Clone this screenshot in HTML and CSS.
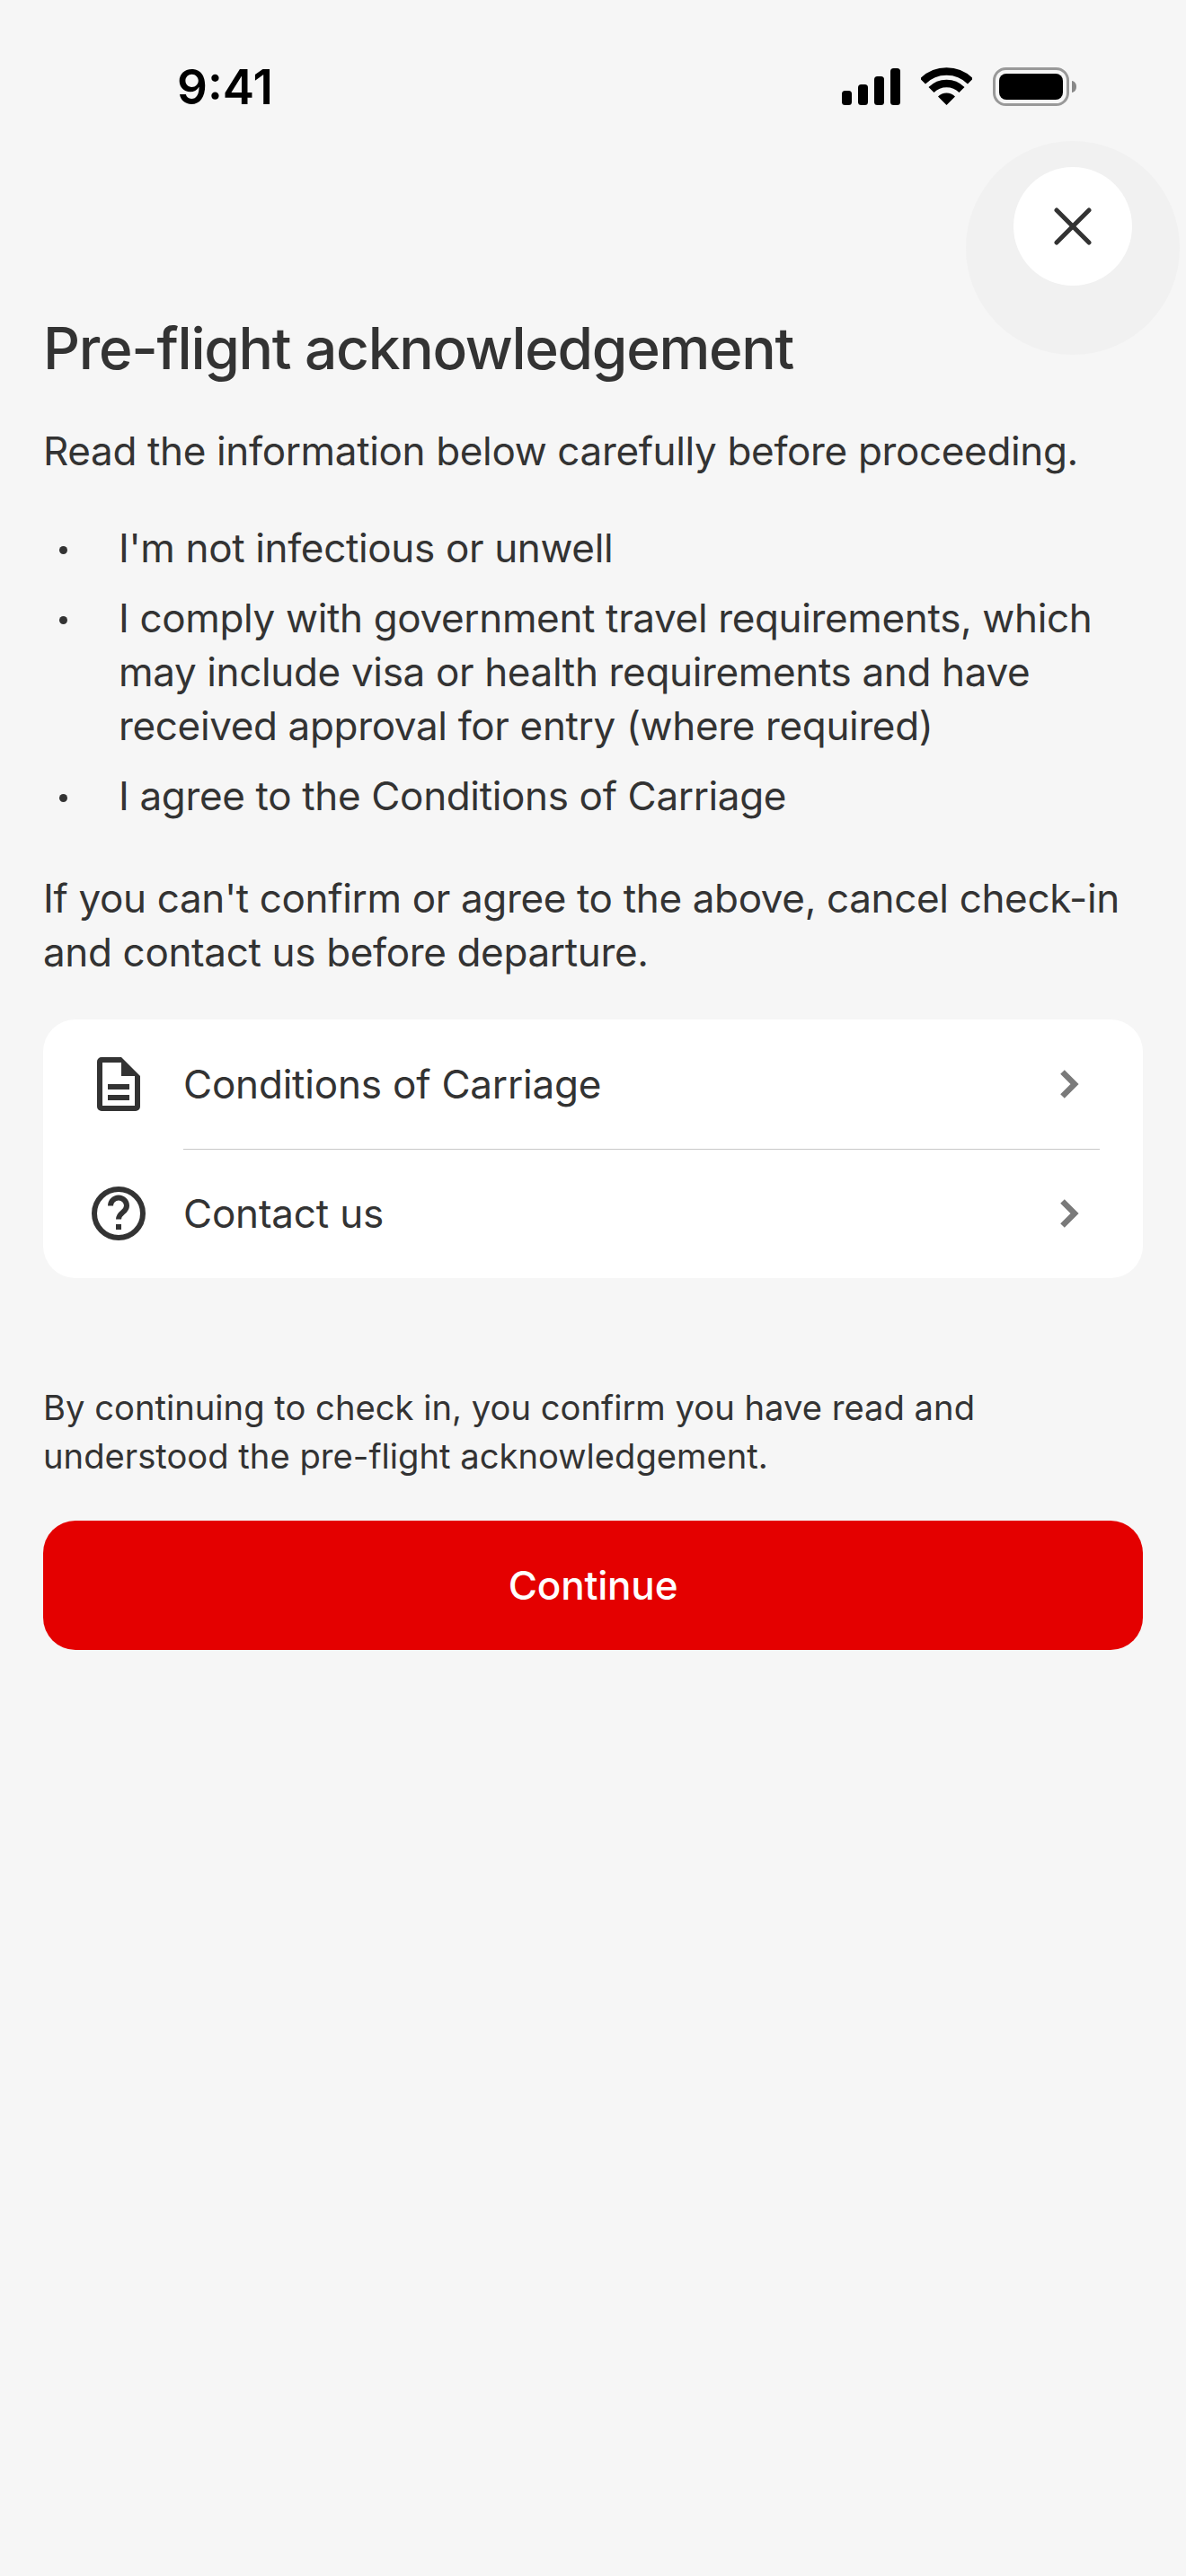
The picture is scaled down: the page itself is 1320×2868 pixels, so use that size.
FILE: index.html
```html
<!DOCTYPE html>
<html lang="en">
<head>
<meta charset="utf-8">
<title>Pre-flight acknowledgement</title>
<link rel="stylesheet" href="styles.css">
</head>
<body>
<div class="screen">
  <header class="status">
    <span class="time">9:41</span>
    <div class="status-icons">
      <svg class="signal" width="65" height="41" viewBox="0 0 65 41"><rect x="0" y="25" width="11" height="16" rx="3.5"/><rect x="18" y="18" width="11" height="23" rx="3.5"/><rect x="36" y="9" width="11" height="32" rx="3.5"/><rect x="54" y="0" width="11" height="41" rx="3.5"/></svg>
      <svg class="wifi" width="57" height="42" viewBox="0 0 57 42"><path d="M2 15.500a37.500 37.500 0 0 1 53 0" fill="none" stroke="#000" stroke-width="8.500"/><path d="M11.500 25a24 24 0 0 1 34 0" fill="none" stroke="#000" stroke-width="8.500"/><path d="M19 32.500a13.500 13.500 0 0 1 19 0L28.500 42z"/></svg>
      <svg class="battery" width="93" height="43" viewBox="0 0 93 43"><rect x="1.500" y="1.500" width="82" height="40" rx="13" fill="none" stroke="#999" stroke-width="3"/><rect x="7" y="7" width="71" height="29" rx="8"/><path d="M88 15c3 .5 5 3 5 6.500s-2 6-5 6.500z" fill="#888"/></svg>
    </div>
  </header>

  <div class="close-halo"></div>
  <button class="close" aria-label="Close">
    <svg width="44" height="44" viewBox="0 0 44 44"><path d="M4 4l36 36M40 4L4 40" fill="none" stroke="#333" stroke-width="5" stroke-linecap="round"/></svg>
  </button>

  <main class="content">
    <h1 class="title">Pre-flight acknowledgement</h1>
    <p class="body-text">Read the information below carefully before proceeding.</p>
    <ul class="list">
      <li class="list-item">I'm not infectious or unwell</li>
      <li class="list-item">I comply with government travel requirements, which may include visa or health requirements and have received approval for entry (where required)</li>
      <li class="list-item">I agree to the Conditions of Carriage</li>
    </ul>
    <p class="body-text closing">If you can't confirm or agree to the above, cancel check-in and contact us before departure.</p>

    <nav class="card">
      <a class="row">
        <span class="row-icon">
          <svg width="48" height="60" viewBox="0 0 48 60"><path fill="#333" fill-rule="evenodd" d="M5 0H27L48 21V55a5 5 0 0 1-5 5H5a5 5 0 0 1-5-5V5a5 5 0 0 1 5-5ZM6 6V54H42V21H27V6ZM12 30H36V36H12ZM12 42H36V48H12Z"/></svg>
        </span>
        <span class="row-label">Conditions of Carriage</span>
        <svg class="chevron" width="21" height="32" viewBox="0 0 21 32"><path d="M2.500 2.500L16 16 2.500 29.500" fill="none" stroke="#7a7a7a" stroke-width="6.500"/></svg>
      </a>
      <a class="row">
        <span class="row-icon">
          <svg width="60" height="60" viewBox="0 0 60 60"><circle cx="30" cy="30" r="27" fill="none" stroke="#333" stroke-width="6"/><path d="M21 21.500a9 9 0 0 1 18 0c0 7.500-9 7-9 15" fill="none" stroke="#333" stroke-width="6"/><rect x="27" y="42" width="6" height="6" fill="#333"/></svg>
        </span>
        <span class="row-label">Contact us</span>
        <svg class="chevron" width="21" height="32" viewBox="0 0 21 32"><path d="M2.500 2.500L16 16 2.500 29.500" fill="none" stroke="#7a7a7a" stroke-width="6.500"/></svg>
      </a>
    </nav>

    <p class="note">By continuing to check in, you confirm you have read and understood the pre-flight acknowledgement.</p>
    <button class="continue">Continue</button>
  </main>
</div>
</body>
</html>
```
FILE: styles.css
```css
* { box-sizing: border-box; }
html, body { margin: 0; padding: 0; }
body {
  background: #f6f6f6;
  color: #333;
  font-family: Inter, "Liberation Sans", sans-serif;
}
.screen { position: relative; width: 1320px; height: 2868px; overflow: hidden; }
.status {
  display: flex;
  justify-content: space-between;
  align-items: flex-start;
  height: 346px;
  padding: 62px 122px 0 197px;
}
.time { font-size: 53px; line-height: 70px; font-weight: 600; color: #000; }
.status-icons { display: flex; align-items: flex-start; padding-top: 13px; }
.signal { margin-top: 1px; margin-right: 23px; }
.wifi { margin-right: 23px; }
.close-halo {
  position: absolute; left: 1075px; top: 157px;
  width: 238px; height: 238px; border-radius: 50%;
  background: #f1f1f1;
}
.close {
  position: absolute; left: 1128px; top: 186px;
  width: 132px; height: 132px; border: 0; padding: 0; border-radius: 50%;
  background: #fff;
  display: flex; align-items: center; justify-content: center;
}
.content { padding: 0 48px; }
.title { margin: 0; font-size: 64px; line-height: 84px; font-weight: 500; letter-spacing: -1.3px; }
.body-text { margin: 42px 0 0; font-size: 44px; line-height: 60px; letter-spacing: -0.35px; }
.list { list-style: none; margin: 48px 0 0; padding: 0; display: flex; flex-direction: column; gap: 18px; letter-spacing: -0.35px; }
.list-item { position: relative; padding-left: 84px; font-size: 44px; line-height: 60px; }
.list-item::before {
  content: ""; position: absolute; left: 18px; top: 28px;
  width: 9px; height: 9px; border-radius: 50%; background: #333;
}
.closing { margin-top: 54px; }
.card {
  margin-top: 45px;
  background: #fff;
  border-radius: 36px;
  padding: 0 48px 0 0;
  display: flex; flex-direction: column;
}
.row { position: relative; display: flex; align-items: center; height: 144px; }
.row + .row::before {
  content: ""; position: absolute; left: 156px; right: 0; top: 0;
  height: 1px; background: #c8c8c8;
}
.row-icon { width: 120px; margin: 0 12px 0 24px; display: flex; justify-content: center; }
.row-label { flex: 1; font-size: 44px; line-height: 60px; letter-spacing: -0.2px; }
.chevron { margin-right: 23px; }
.note { margin: 117px 0 0; font-size: 38.200px; line-height: 54px; }
.continue {
  display: block; width: 100%; height: 144px; margin-top: 45px;
  border: 0; border-radius: 36px;
  background: #e40000; color: #fff;
  font-family: inherit; font-size: 44px; font-weight: 500; letter-spacing: -0.2px;
}
```
